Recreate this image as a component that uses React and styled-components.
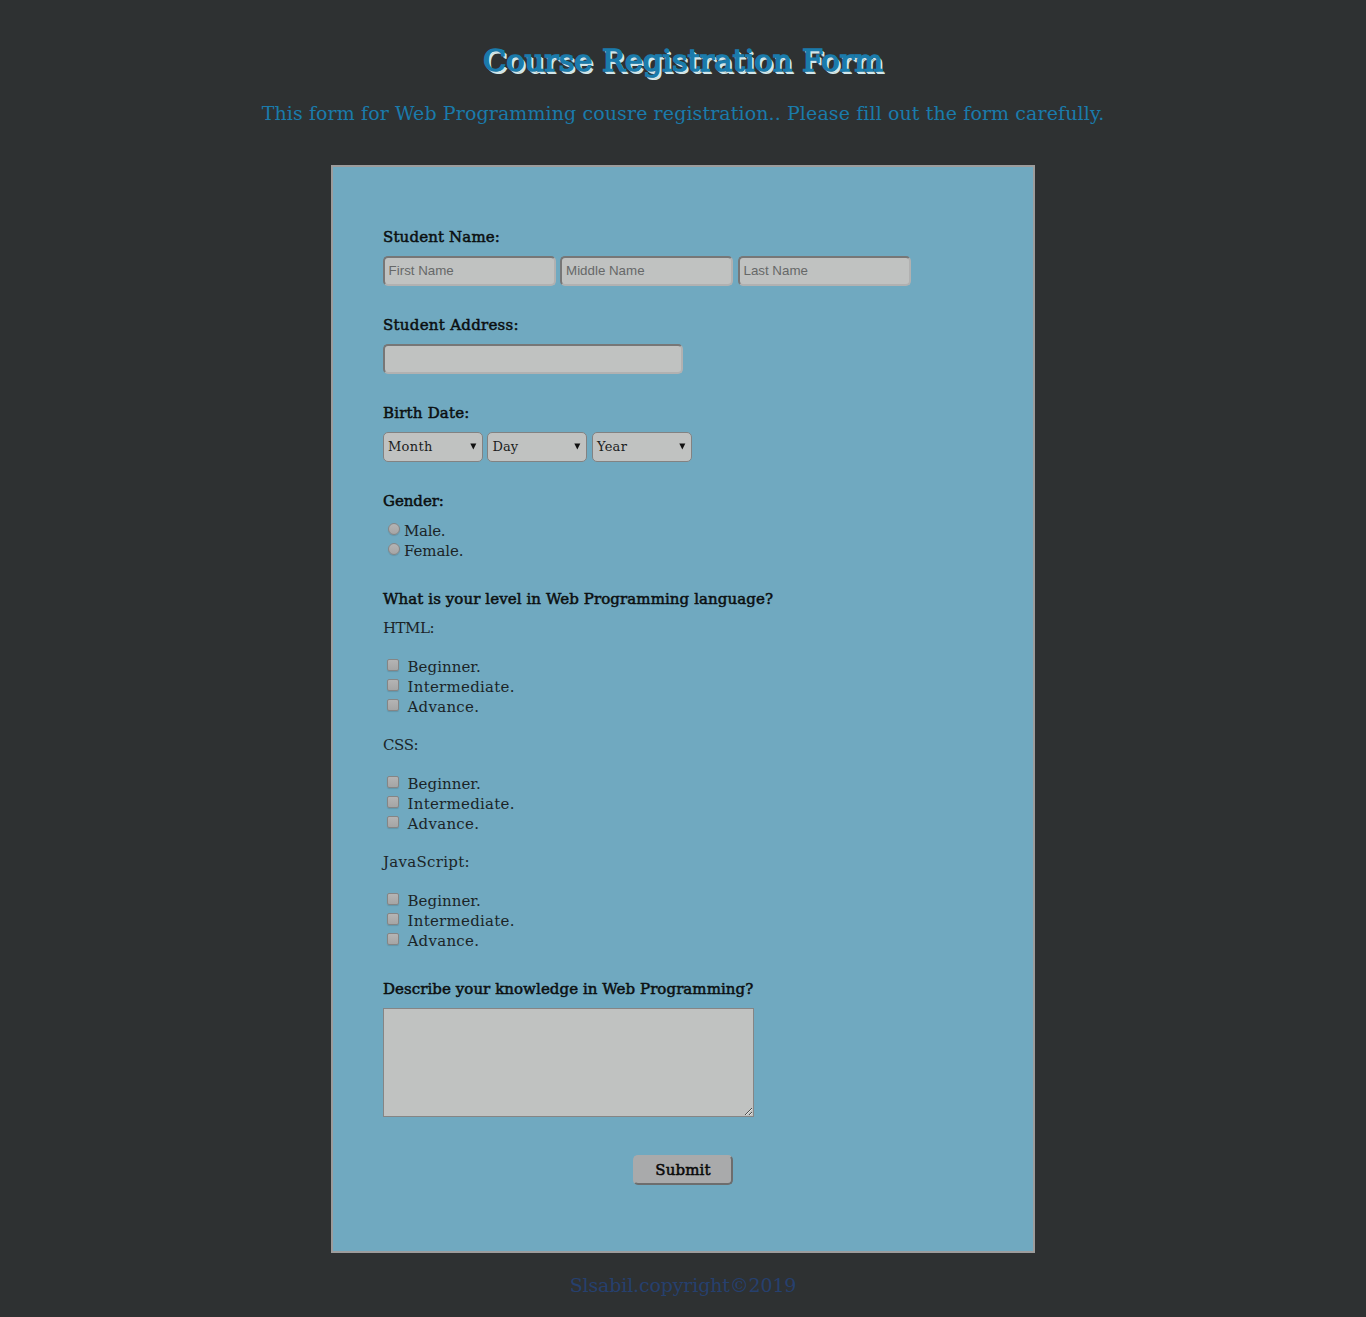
import React from "react";
import styled, { createGlobalStyle } from "styled-components";

const slab = `"DejaVu Serif", serif`;

const Global = createGlobalStyle`
  *, *::before { box-sizing: border-box; }
  body { margin: 0; background: #2e3132; font-family: ${slab}; }
`;
const Page = styled.main`
  height: 1317px; display: flex; flex-direction: column; align-items: center;
`;
const T = styled.span`
  white-space: nowrap; letter-spacing: ${(p) => p.$ls || 0}px; font-variant-ligatures: none;
`;
const Title = styled.h1`
  margin: 39px 0 0; height: 43px; line-height: 43px; font-size: 30.4px; font-weight: 400;
  color: #1a7bab; -webkit-text-stroke: 1.5px #1a7bab;
  text-shadow: 1.5px 1.5px #d3e6e9, 2.6px 2.6px #d3e6e9;
`;
const Intro = styled.p`
  margin: 18px 0 0; height: 26px; line-height: 26px; font-size: 19px; color: #1a7bab;
`;
const Panel = styled.form`
  margin-top: 39px; width: 704px; height: 1088px; border: 2px solid #9c9c9c;
  padding: 59px 50px 0; background: #70a9c0; color: #1b2427; font-size: 15px;
  display: flex; flex-direction: column;
`;
const Group = styled.section`
  margin-bottom: 28px; display: flex; flex-direction: column; align-items: flex-start;
`;
const Label = styled.div`
  height: 20px; line-height: 22px; margin-bottom: ${(p) => p.$gap ?? 10}px;
  color: #0b0f10; -webkit-text-stroke: 0.5px #0b0f10;
`;
const Fields = styled.div`display: flex; gap: 4.45px;`;
const Field = styled.input`
  width: ${(p) => p.$w}px; height: 30px; padding: 0 4px 2px 3.6px; margin: 0;
  border: 2px solid; border-color: #777 #b1b1b1 #b1b1b1 #777; border-radius: 5px;
  background: #c0c2c1; font: 13.33px "Liberation Sans", Arial, sans-serif; outline: 0;
  &::placeholder { color: #666868; opacity: 1; }
`;
const Select = styled.button`
  width: 100px; height: 30px; padding: 0 5px 2px 4px; border: 1px solid #828282; border-radius: 5px;
  background: #c0c2c1; color: #1b1d1d; font: 13px ${slab};
  display: flex; align-items: center; justify-content: space-between;
`;
const Option = styled.label`
  height: 20px; line-height: 22px; display: flex; padding-left: ${(p) => (p.$radio ? 5 : 4)}px;
  gap: ${(p) => (p.$radio ? 4 : 8.5)}px;
`;
const Mark = styled.input`
  appearance: none; width: 12px; height: 12px; margin: 3px 0 0; border: 1px solid #858585;
  border-radius: ${(p) => (p.type === "radio" ? "50%" : "2px")};
  background: linear-gradient(#b4b4b4, #a5a5a5); box-shadow: 0 1px 1px rgba(0, 0, 0, 0.12);
`;
const Topic = styled.div`height: 20px; line-height: 22px; margin-bottom: 19px;`;
const Options = styled.div`margin-bottom: ${(p) => (p.$last ? 0 : 18)}px;`;
const Area = styled.textarea`
  display: block; width: 371px; height: 109px; border: 1px solid #858585; border-radius: 0;
  background: #c0c2c1; resize: both; outline: 0;
`;
const Submit = styled.button`
  align-self: center; margin-top: 10px; width: 100px; height: 30px; padding: 0 0 1px;
  border: 2px solid; border-color: #a9aaab #6d6d6d #6d6d6d #a9aaab; border-radius: 5px;
  background: #a9aaab; color: #080808; -webkit-text-stroke: 0.5px #080808;
  font: 15px ${slab};
`;
const Footer = styled.footer`
  margin-top: 19px; height: 26px; line-height: 26px; font-size: 19px; color: #26406e;
`;

const Arrow = () => (
  <svg width="7" height="7" viewBox="0 0 7 7"><path d="M.3.6h6L3.3 6.6z" fill="#101010" /></svg>
);

const parts = [["Month", 0.3], ["Day", 0.1], ["Year", 0.3]];
const genders = [["Male.", -0.3], ["Female.", -0.1]];
const topics = [["HTML:", -0.5], ["CSS:", -0.4], ["JavaScript:", 0.28]];
const levels = [["Beginner.", 0.05], ["Intermediate.", 0.27], ["Advance.", 0.27]];

export default function App() {
  return (
    <>
      <Global />
      <Page>
        <Title><T>Course Registration Form</T></Title>
        <Intro><T $ls={0.1}>This form for Web Programming cousre registration.. Please fill out the form carefully.</T></Intro>
        <Panel>
          <Group>
            <Label><T $ls={0.15}>Student Name:</T></Label>
            <Fields>
              {["First Name", "Middle Name", "Last Name"].map((p) => <Field key={p} $w={173} placeholder={p} />)}
            </Fields>
          </Group>
          <Group>
            <Label><T $ls={0.28}>Student Address:</T></Label>
            <Field $w={300} />
          </Group>
          <Group>
            <Label><T $ls={0.2}>Birth Date:</T></Label>
            <Fields>
              {parts.map(([p, ls]) => <Select type="button" key={p}><T $ls={ls}>{p}</T><Arrow /></Select>)}
            </Fields>
          </Group>
          <Group>
            <Label><T $ls={-0.05}>Gender:</T></Label>
            {genders.map(([p, ls]) => <Option key={p} $radio><Mark type="radio" name="gender" /><T $ls={ls}>{p}</T></Option>)}
          </Group>
          <Group>
            <Label $gap={9}><T $ls={0.09}>What is your level in Web Programming language?</T></Label>
            {topics.map(([t, tls], i) => (
              <React.Fragment key={t}>
                <Topic><T $ls={tls}>{t}</T></Topic>
                <Options $last={i === 2}>
                  {levels.map(([p, ls]) => <Option key={p}><Mark type="checkbox" /><T $ls={ls}>{p}</T></Option>)}
                </Options>
              </React.Fragment>
            ))}
          </Group>
          <Group>
            <Label><T $ls={0.06}>Describe your knowledge in Web Programming?</T></Label>
            <Area />
          </Group>
          <Submit type="button"><T $ls={0.15}>Submit</T></Submit>
        </Panel>
        <Footer><T $ls={-0.16}>Slsabil.copyright©2019</T></Footer>
      </Page>
    </>
  );
}
